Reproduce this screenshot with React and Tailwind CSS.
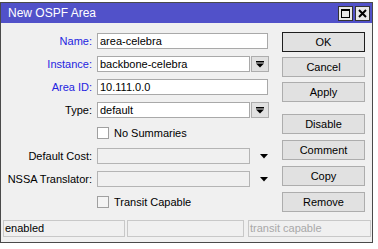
const font = { fontFamily: '"Liberation Sans", Arial, sans-serif' };

function ComboButton() {
  return (
    <div className="ml-[1px] flex h-[16px] w-[18px] items-center justify-center border border-[#adadad] bg-[#e1e1e1]">
      <svg width="8" height="7" viewBox="0 0 8 7">
        <rect x="0" y="0" width="8" height="1.5" fill="#000" />
        <path d="M0 2.5 H8 L4 6.5 Z" fill="#000" />
      </svg>
    </div>
  );
}

function Arrow() {
  return (
    <div className="flex w-[18px] items-center justify-end">
      <svg width="8" height="5" viewBox="0 0 8 5">
        <path d="M0 0 H8 L4 4.5 Z" fill="#000" />
      </svg>
    </div>
  );
}

function Row({ label, blue, children }) {
  return (
    <div className="flex h-[16px] items-center">
      <div className={`w-[92px] pr-[1px] text-right ${blue ? "text-[#2424e0]" : "text-black"}`}>
        {label}
      </div>
      <div className="ml-[4px] flex h-[16px] items-center">{children}</div>
    </div>
  );
}

function Field({ value, w, disabled }) {
  return (
    <div
      className={`flex h-[16px] items-center border px-[2px] ${w} ${
        disabled ? "border-[#b4b4b4] bg-[#f0f0f0]" : "border-[#a9a9a9] bg-white"
      }`}
    >
      {value}
    </div>
  );
}

function Check({ label, grey }) {
  return (
    <div className="flex h-[16px] items-center pl-[96px]">
      <div className={`h-[12px] w-[12px] border border-[#a0a0a0] ${grey ? "bg-[#f4f4f4]" : "bg-white"}`} />
      <span className="ml-[5px]">{label}</span>
    </div>
  );
}

function Btn({ children, main }) {
  return (
    <div
      className={`flex h-[20px] items-center justify-center bg-[#e1e1e1] ${
        main ? "border border-[#1e1e1e]" : "border border-[#adadad]"
      }`}
    >
      {children}
    </div>
  );
}

export default function App() {
  return (
    <div className="h-[249px] w-[378px] overflow-hidden bg-white text-[11px] text-black" style={font}>
      <div className="pt-[2px]">
        <div className="flex h-[241px] w-[373px] flex-col border border-[#4a4a4a] bg-[#f0f0f0]">
          {/* title bar */}
          <div className="flex h-[20px] items-center bg-[#5151c9] pl-[7px] pr-[2px]">
            <span className="text-[12px] text-white">New OSPF Area</span>
            <div className="ml-auto flex gap-[2px]">
              <div className="flex h-[15px] w-[15px] items-center justify-center border border-[#333] bg-[#e8e8e8]">
                <svg width="9" height="9" viewBox="0 0 9 9">
                  <rect x="0.5" y="0.5" width="8" height="8" fill="none" stroke="#000" />
                  <rect x="0" y="0" width="9" height="2" fill="#000" />
                </svg>
              </div>
              <div className="flex h-[15px] w-[15px] items-center justify-center border border-[#333] bg-[#e8e8e8]">
                <svg width="9" height="9" viewBox="0 0 9 9">
                  <path d="M1 1 L8 8 M8 1 L1 8" stroke="#000" strokeWidth="2" />
                </svg>
              </div>
            </div>
          </div>

          <div className="flex flex-1">
            {/* form */}
            <div className="flex w-[281px] flex-col gap-[7px] pt-[10px]">
              <Row label="Name:" blue>
                <Field value="area-celebra" w="w-[171px]" />
              </Row>
              <Row label="Instance:" blue>
                <Field value="backbone-celebra" w="w-[153px]" />
                <ComboButton />
              </Row>
              <Row label="Area ID:" blue>
                <Field value="10.111.0.0" w="w-[171px]" />
              </Row>
              <Row label="Type:">
                <Field value="default" w="w-[153px]" />
                <ComboButton />
              </Row>
              <Check label="No Summaries" />
              <Row label="Default Cost:">
                <Field value="" w="w-[153px]" disabled />
                <Arrow />
              </Row>
              <Row label="NSSA Translator:">
                <Field value="" w="w-[153px]" disabled />
                <Arrow />
              </Row>
              <Check label="Transit Capable" grey />
            </div>

            {/* buttons */}
            <div className="flex w-[83px] flex-col pt-[9px]">
              <div className="flex flex-col gap-[5px]">
                <Btn main>OK</Btn>
                <Btn>Cancel</Btn>
                <Btn>Apply</Btn>
              </div>
              <div className="mt-[12px] flex flex-col gap-[6px]">
                <Btn>Disable</Btn>
                <Btn>Comment</Btn>
                <Btn>Copy</Btn>
                <Btn>Remove</Btn>
              </div>
            </div>
          </div>

          {/* status bar */}
          <div className="mb-[5px] flex h-[17px] pl-[2px]">
            <div className="flex w-[122px] items-center border border-[#c8c8c8] pl-[1px]">enabled</div>
            <div className="ml-[2px] w-[117px] border border-[#c8c8c8]" />
            <div className="ml-[4px] flex w-[123px] items-center border border-[#c8c8c8] pl-[1px] text-[#a8a8a8]">
              transit capable
            </div>
          </div>
        </div>
      </div>
    </div>
  );
}
